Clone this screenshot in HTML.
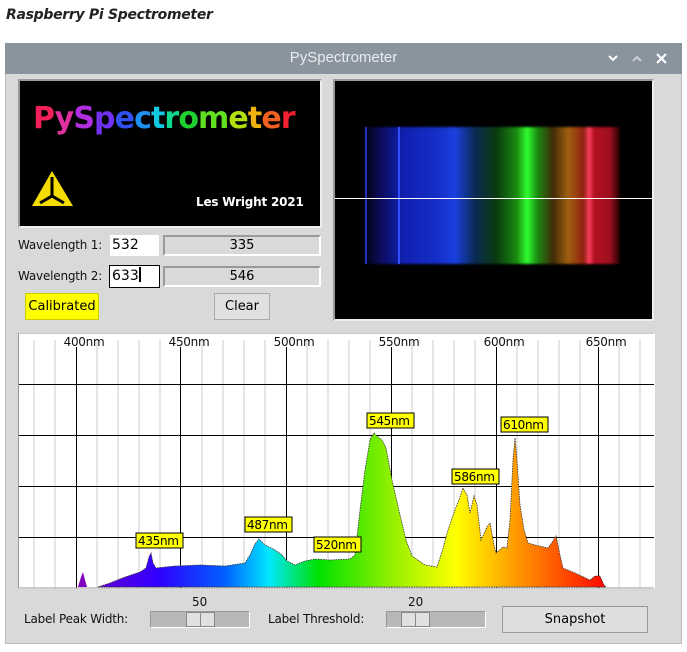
<!DOCTYPE html>
<html><head><meta charset="utf-8"><style>
*{margin:0;padding:0;box-sizing:border-box}
body{width:687px;height:652px;background:#fff;position:relative;font-family:"DejaVu Sans","Liberation Sans",sans-serif;overflow:hidden}
.a{position:absolute}
.t{font-size:12px;color:#111}
</style></head><body>
<div class="a" style="left:6px;top:7px;font-size:14px;font-style:italic;font-weight:bold;color:#222;letter-spacing:-0.3px;font-family:'DejaVu Sans',sans-serif;">Raspberry Pi Spectrometer</div>
<div class="a" style="left:5px;top:43px;width:677px;height:601px;background:#d9d9d9;border:1px solid #bbb"></div>
<div class="a" style="left:5px;top:43px;width:677px;height:31px;background:#8a949e"></div>
<div class="a" style="left:5px;top:49px;width:677px;text-align:center;color:#e8ecef;font-size:15px;font-family:'Liberation Sans',sans-serif">PySpectrometer</div>
<svg class="a" style="left:605px;top:52px" width="70" height="14"><path d="M4 4l4 4 4-4" stroke="#fff" stroke-width="2" fill="none"/><path d="M28 9l4-4 4 4" stroke="#c8ced3" stroke-width="2" fill="none"/><path d="M52 2l9 9M61 2l-9 9" stroke="#fff" stroke-width="2.2"/></svg>
<!-- logo -->
<div class="a" style="left:18px;top:79px;width:304px;height:149px;background:#000;border:2px solid #999;border-right-color:#eee;border-bottom-color:#eee"></div>
<div class="a" style="left:33px;top:101px;font-size:30px;font-weight:bold;letter-spacing:-0.9px;font-family:'DejaVu Sans',sans-serif"><span style="color:#f0205a">P</span><span style="color:#e030a0">y</span><span style="color:#b030e0">S</span><span style="color:#7030f0">p</span><span style="color:#3050f0">e</span><span style="color:#2090f0">c</span><span style="color:#10c8e0">t</span><span style="color:#10d890">r</span><span style="color:#20d030">o</span><span style="color:#60e020">m</span><span style="color:#b0e010">e</span><span style="color:#f0b010">t</span><span style="color:#f06020">e</span><span style="color:#f02030">r</span></div>
<svg class="a" style="left:31px;top:169px" width="46" height="40"><polygon points="21,2 42,37 1,37" fill="#f5dc00"/><path d="M21 8 L21 27 M21 27 L9 34 M21 27 L33 34" stroke="#000" stroke-width="3" fill="none"/></svg>
<div class="a" style="left:196px;top:195px;color:#fff;font-size:12px;font-weight:bold;letter-spacing:-0.2px">Les Wright 2021</div>
<!-- wavelength rows -->
<div class="a t" style="left:18px;top:238px;font-size:12px;letter-spacing:-0.2px">Wavelength 1:</div>
<div class="a" style="left:110px;top:235px;width:49px;height:21px;background:#fff;font-size:14px;padding-left:2px;line-height:20px">532</div>
<div class="a" style="left:163px;top:235px;width:158px;height:21px;border:2px solid #999;border-right-color:#fff;border-bottom-color:#fff;text-align:center;font-size:13px;line-height:17px">335</div>
<div class="a t" style="left:18px;top:269px;font-size:12px;letter-spacing:-0.2px">Wavelength 2:</div>
<div class="a" style="left:109px;top:265px;width:51px;height:23px;background:#fff;border:1px solid #000;font-size:14px;padding-left:2px;line-height:20px">633<span style="display:inline-block;width:2px;height:15px;background:#000;vertical-align:-2px"></span></div>
<div class="a" style="left:163px;top:266px;width:158px;height:21px;border:2px solid #999;border-right-color:#fff;border-bottom-color:#fff;text-align:center;font-size:13px;line-height:17px">546</div>
<div class="a" style="left:25px;top:293px;width:74px;height:27px;background:#ffff00;border:1px solid #cc0;text-align:center;font-size:13px;line-height:25px">Calibrated</div>
<div class="a" style="left:214px;top:293px;width:56px;height:27px;background:#e0e0e0;border:1px solid #aaa;text-align:center;font-size:13px;line-height:25px">Clear</div>
<!-- spectrum image -->
<div class="a" style="left:333px;top:79px;width:321px;height:242px;background:#000;border:2px solid #999;border-right-color:#eee;border-bottom-color:#eee;overflow:hidden">
<div class="a" style="left:27px;top:46px;width:258px;height:137px;background:linear-gradient(90deg,#000 0%,#0a0a50 6%,#1020b0 16%,#1530c8 30%,#1a40e0 36%,#0a2a50 44%,#0a3a10 52%,#1a8a10 60%,#30ff30 64%,#1a8a10 68%,#402a08 74%,#a06010 80%,#902010 86%,#ff4060 88%,#b01020 90%,#a01020 96%,#200000 100%);filter:blur(1px)"></div>
<div class="a" style="left:30px;top:46px;width:2px;height:137px;background:#2030c0"></div>
<div class="a" style="left:63px;top:46px;width:2px;height:137px;background:#3050ff"></div>
<div class="a" style="left:0;top:117px;width:321px;height:1px;background:#fff"></div>
</div>
<!-- graph -->
<svg class="a" style="left:18px;top:333px" width="637" height="256" viewBox="18 333 637 256">
<defs><linearGradient id="g" x1="60" x2="610" gradientUnits="userSpaceOnUse" y1="0" y2="0">
<stop offset="0" stop-color="#8000c0"/><stop offset="0.18" stop-color="#3000ff"/><stop offset="0.3" stop-color="#0060ff"/><stop offset="0.38" stop-color="#00e8ff"/><stop offset="0.47" stop-color="#00e000"/><stop offset="0.6" stop-color="#90f000"/><stop offset="0.72" stop-color="#ffff00"/><stop offset="0.84" stop-color="#ff9000"/><stop offset="1" stop-color="#ff0000"/></linearGradient></defs>
<rect x="18" y="333" width="637" height="256" fill="#fff"/>
<g stroke="#ccc" stroke-width="1">
<path d="M34 340V588M55 340V588M97 340V588M118 340V588M139 340V588M160 340V588M202 340V588M223 340V588M244 340V588M265 340V588M307 340V588M328 340V588M349 340V588M370 340V588M412 340V588M433 340V588M454 340V588M475 340V588M517 340V588M538 340V588M559 340V588M580 340V588M619 340V588M640 340V588"/></g>
<g stroke="#000" stroke-width="1"><path d="M76.5 347V588M180.5 347V588M286.5 347V588M391.5 347V588M496.5 347V588M598.5 347V588"/>
<path d="M18 384.5H654M18 435.5H654M18 486.5H654M18 537.5H654"/></g>
<path d="M78 587L81 577L83 572L85 580L87 587Z" fill="#8000c0"/>
<path d="M98 587L110 583L125 577L140 572L146 568L149 557L151 553L153 563L156 568L175 566L200 565L225 566L245 563L250 555L255 544L259 539L265 545L275 550L282 555L287 561L295 565L305 561L315 559L330 560L350 559L355 555L360 510L365 470L370 440L374 433L378 437L382 440L386 448L392 480L400 515L406 540L412 556L425 565L437 567L442 552L448 530L455 510L459 500L463 488L467 495L470 513L474 496L477 505L481 540L487 527L490 523L494 545L496 553L503 547L507 548L510 520L513 460L515 438L517 460L520 505L524 530L528 543L535 545L548 548L553 541L556 536L560 555L563 568L575 573L590 580L595 576L600 576L604 585L606 587Z" fill="url(#g)" stroke="#333" stroke-width="0.8" stroke-dasharray="1.5 1"/>
<path d="M18 588H654M18 333H654M18.5 333V588" stroke="#999" stroke-width="1"/>
<g font-family="DejaVu Sans,sans-serif" font-size="12" fill="#111" text-anchor="middle" letter-spacing="-0.3">
<text x="84" y="346">400nm</text><text x="189" y="346">450nm</text><text x="294" y="346">500nm</text><text x="399" y="346">550nm</text><text x="504" y="346">600nm</text><text x="606" y="346">650nm</text></g>
<g font-family="DejaVu Sans,sans-serif" font-size="12" fill="#000" letter-spacing="-0.3">
<rect x="136" y="533" width="47" height="15" fill="#ff0" stroke="#000"/><text x="138" y="545">435nm</text>
<rect x="245" y="517" width="47" height="15" fill="#ff0" stroke="#000"/><text x="247" y="529">487nm</text>
<rect x="314" y="537" width="47" height="15" fill="#ff0" stroke="#000"/><text x="316" y="549">520nm</text>
<rect x="367" y="413" width="47" height="15" fill="#ff0" stroke="#000"/><text x="369" y="425">545nm</text>
<rect x="452" y="469" width="47" height="15" fill="#ff0" stroke="#000"/><text x="454" y="481">586nm</text>
<rect x="501" y="417" width="47" height="15" fill="#ff0" stroke="#000"/><text x="503" y="429">610nm</text></g>
</svg>
<!-- bottom controls -->
<div class="a t" style="left:192px;top:595px;font-size:12px">50</div>
<div class="a t" style="left:24px;top:612px;font-size:12px;letter-spacing:-0.2px">Label Peak Width:</div>
<div class="a" style="left:150px;top:611px;width:100px;height:17px;background:#b8b8b8;border:1px solid #999;border-right-color:#fff;border-bottom-color:#fff"></div>
<div class="a" style="left:186px;top:612px;width:29px;height:15px;background:#e0e0e0;border:1px solid #888"><div style="position:absolute;left:13px;top:0;width:1px;height:13px;background:#888"></div></div>
<div class="a t" style="left:408px;top:595px;font-size:12px">20</div>
<div class="a t" style="left:268px;top:612px;font-size:12px;letter-spacing:-0.2px">Label Threshold:</div>
<div class="a" style="left:386px;top:611px;width:100px;height:17px;background:#b8b8b8;border:1px solid #999;border-right-color:#fff;border-bottom-color:#fff"></div>
<div class="a" style="left:401px;top:612px;width:29px;height:15px;background:#e0e0e0;border:1px solid #888"><div style="position:absolute;left:13px;top:0;width:1px;height:13px;background:#888"></div></div>
<div class="a" style="left:502px;top:606px;width:146px;height:27px;background:#dedede;border:1px solid #999;text-align:center;font-size:13px;line-height:25px">Snapshot</div>
</body></html>
